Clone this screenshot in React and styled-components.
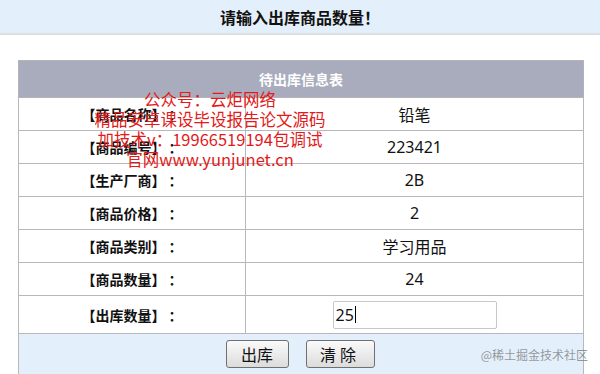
import React from 'react';
import styled, { createGlobalStyle } from 'styled-components';

const Global = createGlobalStyle`
  html, body { margin: 0; padding: 0; background: #fff; }
  body { font-family: "Noto Sans", "Noto Sans CJK SC", sans-serif; }
`;

const Page = styled.div`
  width: 600px;
  height: 374px;
  overflow: hidden;
  position: relative;
  background: #fff;
`;

const TopBar = styled.div`
  height: 33px;
  background: #e3effb;
  border-bottom: 2px solid #dcdfe3;
  display: flex;
  align-items: center;
  justify-content: center;
  font-family: "Noto Sans CJK SC", sans-serif;
  font-weight: 700;
  font-size: 16px;
  color: #111;
`;

const Content = styled.div`
  padding: 25px 16px 0 18px;
`;

const Table = styled.table`
  width: 566px;
  border-collapse: collapse;
  border: 1px solid #b3b3b8;
  font-family: "Noto Sans", "Noto Sans CJK SC", sans-serif;
`;

const HeadCell = styled.th`
  height: 36px;
  padding: 0;
  background: #a9acbc;
  color: #fff;
  font-family: "Noto Sans CJK SC", sans-serif;
  font-weight: 700;
  font-size: 14px;
  text-align: center;
  border: 1px solid #b3b3b8;
`;

const Row = styled.tr`
  height: ${p => (p.$tall ? 38 : 33)}px;
`;

const Label = styled.td`
  width: 226px;
  padding: 0;
  text-align: center;
  font-family: "Noto Sans CJK SC", sans-serif;
  font-weight: 700;
  font-size: 14px;
  color: #111;
  border: 1px solid #b8b8bc;
  background: #fff;
`;

const Value = styled.td`
  padding: 0;
  text-align: center;
  font-size: 16px;
  color: #111;
  border: 1px solid #b8b8bc;
  background: #fff;
`;

const FakeInput = styled.div`
  margin: 0 auto;
  width: 160px;
  height: 26px;
  border: 1px solid #c8c8c8;
  border-radius: 2px;
  background: #fff;
  display: flex;
  align-items: center;
  padding-left: 2px;
  font-size: 16px;
  color: #111;
  text-align: left;
`;

const Caret = styled.span`
  display: inline-block;
  width: 1px;
  height: 17px;
  background: #000;
  margin-left: 1px;
`;

const ButtonCell = styled.td`
  height: 41px;
  padding: 0;
  background: #e3f0fb;
  border: 1px solid #b8b8bc;
  vertical-align: top;
`;

const ButtonBar = styled.div`
  display: flex;
  justify-content: center;
  gap: 17px;
  padding-top: 6px;
  padding-right: 2px;
`;

const Button = styled.button`
  width: ${p => p.$w}px;
  height: 28px;
  padding: 0;
  border: 1px solid #707070;
  border-radius: 3px;
  background: linear-gradient(#fafafa, #dcdcdc);
  font-family: "Noto Sans CJK SC", sans-serif;
  font-size: 16px;
  color: #111;
  letter-spacing: ${p => (p.$spaced ? '4px' : '0')};
`;

const Stamp = styled.div`
  position: absolute;
  left: 90px;
  top: 89px;
  width: 240px;
  text-align: center;
  font-family: "Noto Sans CJK SC", sans-serif;
  font-size: 16.5px;
  line-height: 20px;
  color: #e21a1a;
  pointer-events: none;
`;

const Juejin = styled.div`
  position: absolute;
  right: 12px;
  bottom: 11px;
  font-family: "Noto Sans CJK SC", sans-serif;
  font-size: 12px;
  color: rgba(120, 120, 120, 0.75);
`;

const rows = [
  ['【商品名称】 ：', '铅笔'],
  ['【商品编号】 ：', '223421'],
  ['【生产厂商】 ：', '2B'],
  ['【商品价格】 ：', '2'],
  ['【商品类别】 ：', '学习用品'],
  ['【商品数量】 ：', '24'],
];

export default function App() {
  return (
    <Page>
      <Global />
      <TopBar>请输入出库商品数量！</TopBar>
      <Content>
        <Table>
          <thead>
            <tr>
              <HeadCell colSpan={2}>待出库信息表</HeadCell>
            </tr>
          </thead>
          <tbody>
            {rows.map(([k, v]) => (
              <Row key={k}>
                <Label>{k}</Label>
                <Value>{v}</Value>
              </Row>
            ))}
            <Row $tall>
              <Label>【出库数量】 ：</Label>
              <Value>
                <FakeInput>25<Caret /></FakeInput>
              </Value>
            </Row>
            <tr>
              <ButtonCell colSpan={2}>
                <ButtonBar>
                  <Button $w={63}>出库</Button>
                  <Button $w={69} $spaced>清除</Button>
                </ButtonBar>
              </ButtonCell>
            </tr>
          </tbody>
        </Table>
      </Content>
      <Stamp>
        <div>公众号：云炬网络</div>
        <div>精品安卓课设毕设报告论文源码</div>
        <div>加技术v：19966519194包调试</div>
        <div>官网www.yunjunet.cn</div>
      </Stamp>
      <Juejin>@稀土掘金技术社区</Juejin>
    </Page>
  );
}
